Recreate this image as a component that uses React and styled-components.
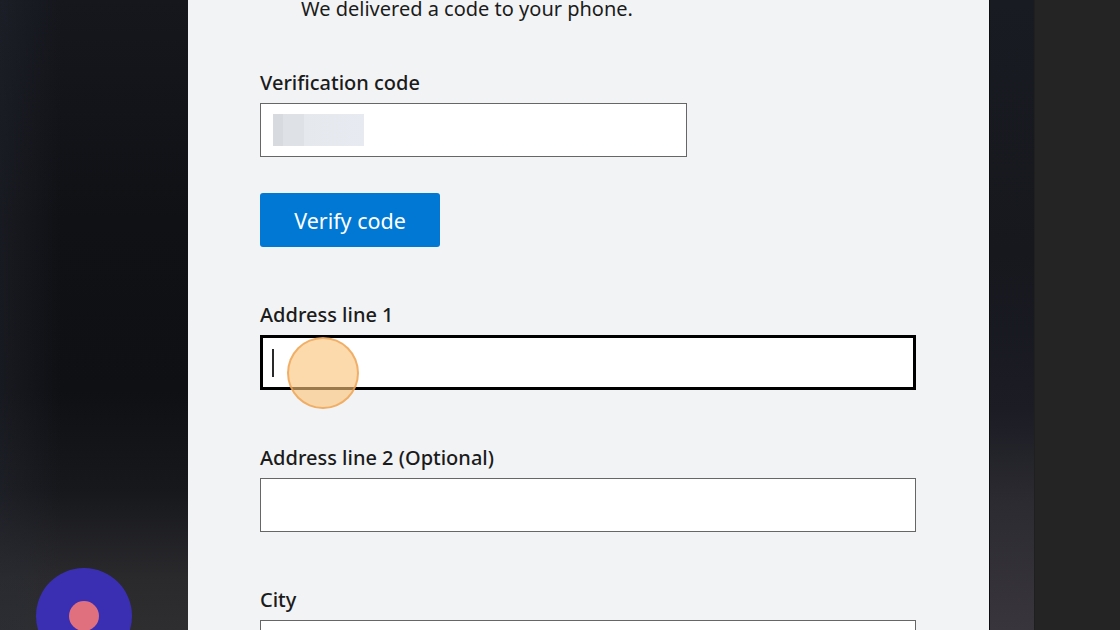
import React from "react";
import styled, { createGlobalStyle } from "styled-components";

const Global = createGlobalStyle`
  html, body { margin: 0; padding: 0; }
  body {
    width: 1120px;
    height: 630px;
    overflow: hidden;
    font-family: "Noto Sans", "Open Sans", sans-serif;
    background: #242424;
  }
`;

const Page = styled.div`
  position: relative;
  display: flex;
  width: 1120px;
  height: 630px;
  overflow: hidden;
`;

const LeftBackdrop = styled.div`
  width: 188px;
  flex-shrink: 0;
  background:
    linear-gradient(90deg, rgba(40, 44, 56, 0.35) 0px, rgba(40, 44, 56, 0) 60px),
    linear-gradient(180deg, #15171d 0%, #101115 35%, #0f1014 62%, #17181c 78%, #2a2a2d 92%, #2e2e31 100%);
`;

const Panel = styled.div`
  width: 801px;
  flex-shrink: 0;
  background: #f2f3f5;
  padding: 0 0 0 72px;
  box-sizing: border-box;
  display: flex;
  flex-direction: column;
  & > * {
    flex-shrink: 0;
  }
`;

const SideStrip = styled.div`
  width: 44px;
  flex-shrink: 0;
  border-left: 1px solid #0c0d10;
  background: linear-gradient(180deg, #191b22 0%, #16181e 40%, #1b1c24 65%, #2c2b31 80%, #38363c 100%);
`;

const RightBackdrop = styled.div`
  flex: 1;
  background: #242424;
  border-left: 1px solid #1f1f1f;
`;

const Intro = styled.p`
  margin: -3px 0 0 41px;
  font-size: 20px;
  line-height: 24px;
  color: #1b1b1b;
`;

const Field = styled.div`
  display: flex;
  flex-direction: column;
  gap: 8px;
  margin-top: ${(p) => p.$top}px;
`;

const Label = styled.label`
  font-size: 20px;
  line-height: 24px;
  font-weight: 500;
  color: #1b1b1b;
`;

const InputBox = styled.div`
  position: relative;
  box-sizing: border-box;
  width: ${(p) => p.$width}px;
  height: ${(p) => (p.$focused ? 55 : 54)}px;
  background: #ffffff;
  border: ${(p) => (p.$focused ? "3px solid #000000" : "1px solid #666666")};
  display: flex;
  align-items: center;
  padding-left: ${(p) => (p.$focused ? 9 : 12)}px;
`;

const BlurredCode = styled.div`
  width: 91px;
  height: 32px;
  background: linear-gradient(90deg, #d7dadf 0px, #d7dadf 10px, #dee1e6 10px, #dee1e6 31px, #e5e8ed 31px, #e7ebf1 91px);
`;

const Caret = styled.span`
  width: 2px;
  height: 28px;
  background: #2a2a2a;
`;

const Button = styled.button`
  margin-top: 36px;
  width: 180px;
  height: 54px;
  border: none;
  border-radius: 3px;
  background: #0078d4;
  color: #ffffff;
  font-family: inherit;
  font-size: 21.5px;
  padding: 0;
  align-self: flex-start;
`;

const ClickMarker = styled.div`
  position: absolute;
  left: 24px;
  top: -1px;
  width: 72px;
  height: 72px;
  border-radius: 50%;
  background: rgba(252, 196, 120, 0.62);
  border: 2px solid rgba(236, 160, 80, 0.75);
  box-sizing: border-box;
`;

const RecordButton = styled.div`
  position: absolute;
  left: 36px;
  top: 568px;
  width: 96px;
  height: 96px;
  border-radius: 50%;
  background: #3a2fb2;
  display: flex;
  align-items: center;
  justify-content: center;
`;

const RecordDot = styled.div`
  width: 30px;
  height: 30px;
  border-radius: 50%;
  background: #e0707e;
`;

export default function App() {
  return (
    <>
      <Global />
      <Page>
        <LeftBackdrop />
        <Panel>
          <Intro>We delivered a code to your phone.</Intro>
          <Field $top={50}>
            <Label>Verification code</Label>
            <InputBox $width={427}>
              <BlurredCode />
            </InputBox>
          </Field>
          <Button>Verify code</Button>
          <Field $top={56}>
            <Label>Address line 1</Label>
            <InputBox $width={656} $focused>
              <Caret />
              <ClickMarker />
            </InputBox>
          </Field>
          <Field $top={56}>
            <Label>Address line 2 (Optional)</Label>
            <InputBox $width={656} />
          </Field>
          <Field $top={56}>
            <Label>City</Label>
            <InputBox $width={656} />
          </Field>
        </Panel>
        <SideStrip />
        <RightBackdrop />
        <RecordButton>
          <RecordDot />
        </RecordButton>
      </Page>
    </>
  );
}
